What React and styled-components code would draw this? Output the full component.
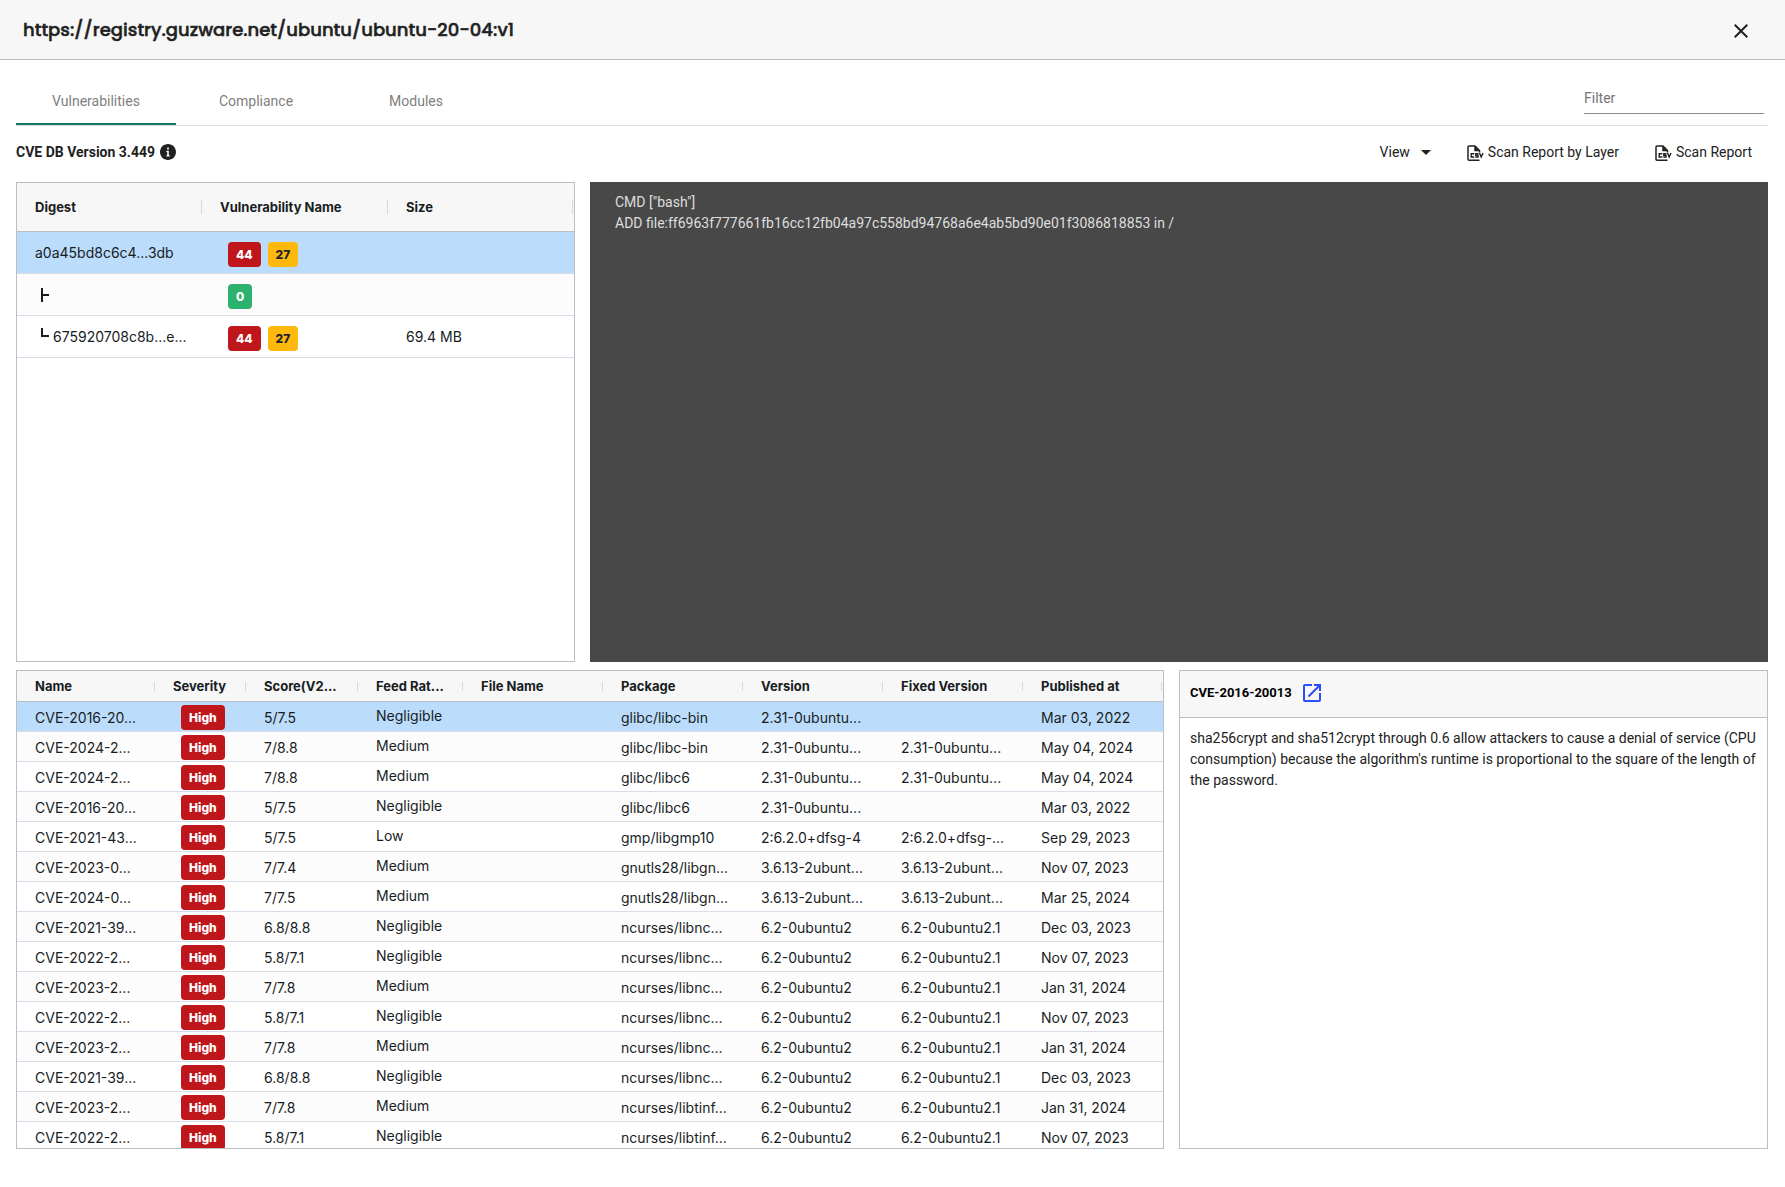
import styled, { createGlobalStyle } from "styled-components";

const COMMANDS = [
  'CMD ["bash"]',
  'ADD file:ff6963f777661fb16cc12fb04a97c558bd94768a6e4ab5bd90e01f3086818853 in /',
];

const TABS = ['Vulnerabilities', 'Compliance', 'Modules'];

const LAYER_COLUMNS = [
  { text: 'Digest', width: 186 },
  { text: 'Vulnerability Name', width: 186 },
  { text: 'Size' },
];

const LAYERS = [
  { digest: 'a0a45bd8c6c4...3db', counts: [['high', 44], ['medium', 27]], size: '' },
  { branch: 'middle', digest: '', counts: [['ok', 0]], size: '' },
  { branch: 'end', digest: '675920708c8b...e...', counts: [['high', 44], ['medium', 27]], size: '69.4 MB' },
];

const CVE_COLUMNS = [
  { text: 'Name', width: 139 },
  { text: 'Severity', width: 91 },
  { text: 'Score(V2...', width: 112 },
  { text: 'Feed Rat...', width: 105 },
  { text: 'File Name', width: 140 },
  { text: 'Package', width: 140 },
  { text: 'Version', width: 140 },
  { text: 'Fixed Version', width: 140 },
  { text: 'Published at' },
];

const CVES = [
  ['CVE-2016-20...', '5/7.5', 'Negligible', 'glibc/libc-bin', '2.31-0ubuntu...', '', 'Mar 03, 2022'],
  ['CVE-2024-2...', '7/8.8', 'Medium', 'glibc/libc-bin', '2.31-0ubuntu...', '2.31-0ubuntu...', 'May 04, 2024'],
  ['CVE-2024-2...', '7/8.8', 'Medium', 'glibc/libc6', '2.31-0ubuntu...', '2.31-0ubuntu...', 'May 04, 2024'],
  ['CVE-2016-20...', '5/7.5', 'Negligible', 'glibc/libc6', '2.31-0ubuntu...', '', 'Mar 03, 2022'],
  ['CVE-2021-43...', '5/7.5', 'Low', 'gmp/libgmp10', '2:6.2.0+dfsg-4', '2:6.2.0+dfsg-...', 'Sep 29, 2023'],
  ['CVE-2023-0...', '7/7.4', 'Medium', 'gnutls28/libgn...', '3.6.13-2ubunt...', '3.6.13-2ubunt...', 'Nov 07, 2023'],
  ['CVE-2024-0...', '7/7.5', 'Medium', 'gnutls28/libgn...', '3.6.13-2ubunt...', '3.6.13-2ubunt...', 'Mar 25, 2024'],
  ['CVE-2021-39...', '6.8/8.8', 'Negligible', 'ncurses/libnc...', '6.2-0ubuntu2', '6.2-0ubuntu2.1', 'Dec 03, 2023'],
  ['CVE-2022-2...', '5.8/7.1', 'Negligible', 'ncurses/libnc...', '6.2-0ubuntu2', '6.2-0ubuntu2.1', 'Nov 07, 2023'],
  ['CVE-2023-2...', '7/7.8', 'Medium', 'ncurses/libnc...', '6.2-0ubuntu2', '6.2-0ubuntu2.1', 'Jan 31, 2024'],
  ['CVE-2022-2...', '5.8/7.1', 'Negligible', 'ncurses/libnc...', '6.2-0ubuntu2', '6.2-0ubuntu2.1', 'Nov 07, 2023'],
  ['CVE-2023-2...', '7/7.8', 'Medium', 'ncurses/libnc...', '6.2-0ubuntu2', '6.2-0ubuntu2.1', 'Jan 31, 2024'],
  ['CVE-2021-39...', '6.8/8.8', 'Negligible', 'ncurses/libnc...', '6.2-0ubuntu2', '6.2-0ubuntu2.1', 'Dec 03, 2023'],
  ['CVE-2023-2...', '7/7.8', 'Medium', 'ncurses/libtinf...', '6.2-0ubuntu2', '6.2-0ubuntu2.1', 'Jan 31, 2024'],
  ['CVE-2022-2...', '5.8/7.1', 'Negligible', 'ncurses/libtinf...', '6.2-0ubuntu2', '6.2-0ubuntu2.1', 'Nov 07, 2023'],
];

const BADGE_COLORS = {
  high: { background: '#bf161c', color: '#fff' },
  medium: { background: '#ffb80c', color: '#212529' },
  ok: { background: '#2cb26e', color: '#fff' },
};

const GlobalStyle = createGlobalStyle`
  * {
    box-sizing: border-box;
  }

  body {
    margin: 0;
    background: #fff;
    color: #212121;
    font-family: Roboto, "Liberation Sans", sans-serif;
    font-size: 14px;
    line-height: 21px;
  }

  button, input {
    color: inherit;
    font: inherit;
  }
`;

const Header = styled.header`
  display: flex;
  align-items: center;
  justify-content: space-between;
  height: 60px;
  padding: 2px 32px 0 23px;
  background: #f7f7f7;
  border-bottom: 1px solid #babfc7;
`;

const Title = styled.h1`
  margin: 0;
  padding-bottom: 2px;
  font-family: Poppins, Inter, sans-serif;
  font-size: 18px;
  font-weight: 500;
  -webkit-text-stroke: 0.5px currentColor;
`;

const IconButton = styled.button`
  display: flex;
  padding: 0;
  background: none;
  border: 0;
  cursor: pointer;
`;

const Main = styled.main`
  padding: 17px 17px 0 16px;
`;

const TabRow = styled.div`
  display: flex;
  justify-content: space-between;
  padding-right: 4px;
  border-bottom: 1px solid #dedede;
`;

const Tabs = styled.nav`
  display: flex;
`;

const Tab = styled.button`
  width: 160px;
  height: 48px;
  padding: 2px 0 0;
  background: none;
  border: 0;
  border-bottom: 2px solid ${({$active}) => $active ? '#11756a' : 'transparent'};
  color: #808080;
  cursor: pointer;
`;

const FilterInput = styled.input`
  width: 180px;
  height: 32px;
  margin-top: 5px;
  padding: 0;
  background: none;
  border: 0;
  border-bottom: 1px solid #8c8c8c;
  outline: none;

  &::placeholder {
    color: #757575;
    opacity: 1;
  }
`;

const Toolbar = styled.div`
  display: flex;
  align-items: center;
  justify-content: space-between;
  height: 56px;
  padding: 0 16px 4px 0;
`;

const DbVersion = styled.div`
  display: flex;
  align-items: center;
  gap: 5px;
  font-weight: 700;
`;

const Actions = styled.div`
  display: flex;
  align-items: center;
  gap: 36px;
`;

const ActionButton = styled.button`
  display: flex;
  align-items: center;
  gap: ${({$gap}) => $gap}px;
  padding: 0;
  background: none;
  border: 0;
  cursor: pointer;
`;

const PanelRow = styled.section`
  display: grid;
  grid-template-columns: ${({$columns}) => $columns};
  gap: 15px;
  height: ${({$height}) => $height}px;
  margin-bottom: 8px;
`;

const Panel = styled.div`
  min-width: 0;
  overflow: hidden;
  border: 1px solid #babfc7;
`;

const Console = styled.div`
  padding: 10px 25px;
  background: #484848;
  color: #dedede;
`;

const Grid = styled.table`
  width: 100%;
  table-layout: fixed;
  border-collapse: separate;
  border-spacing: 0;
  color: #181d1f;
  font-family: Inter, "Liberation Sans", sans-serif;
`;

const Col = styled.col`
  width: ${({$width}) => $width ? `${$width}px` : 'auto'};
`;

const HeadCell = styled.th`
  height: ${({$height}) => $height}px;
  padding: 0 0 0 17px;
  background: linear-gradient(#d5d9df, #d5d9df) right 1px center / 1px 30% no-repeat #f7f7f7;
  border-bottom: 1px solid #babfc7;
  font-size: 13px;
  font-weight: 700;
  text-align: left;
  white-space: nowrap;

  &:first-child {
    padding-left: 18px;
  }
`;

const Row = styled.tr`
  height: ${({$height}) => $height}px;
  background: ${({$selected}) => $selected ? '#bbdcfb' : '#fff'};

  &:nth-child(even) {
    background: #fcfcfc;
  }
`;

const Cell = styled.td`
  height: inherit;
  padding: ${({$top = 0}) => $top}px 0 0 17px;
  border-bottom: 1px solid #d9dce6;
  line-height: 21px;
  white-space: nowrap;

  &:first-child {
    padding-left: 18px;
  }
`;

const RatingCell = styled(Cell)`
  padding-bottom: 2px;
`;

const BadgeList = styled.div`
  display: flex;
  gap: 7px;
  padding: ${({$top}) => $top}px 0 0 8px;
`;

const Badge = styled.span`
  padding: 0 8px;
  border-radius: 4px;
  background: ${({$kind}) => BADGE_COLORS[$kind].background};
  color: ${({$kind}) => BADGE_COLORS[$kind].color};
  font-size: 12px;
  font-weight: 800;
  line-height: 25px;
`;

const Digest = styled.div`
  display: flex;
  align-items: center;
`;

const DetailHeader = styled.div`
  display: flex;
  align-items: center;
  gap: 8px;
  height: 47px;
  padding: 0 10px 3px;
  background: #f7f7f7;
  border-bottom: 1px solid #babfc7;
  color: #000;
`;

const DetailTitle = styled.h2`
  margin: 0;
  font-size: 13px;
  font-weight: 700;
`;

const DetailLink = styled.a`
  display: flex;
  color: #2b4dfb;
`;

const DetailText = styled.p`
  margin: 0;
  padding: 10px;
`;

const CloseIcon = () => (
  <svg width="24" height="24" viewBox="0 0 24 24" fill="currentColor">
    <path d="M19 6.41L17.59 5 12 10.59 6.41 5 5 6.41 10.59 12 5 17.59 6.41 19 12 13.41 17.59 19 19 17.59 13.41 12z" />
  </svg>
);

const InfoIcon = () => (
  <svg width="16" height="16" viewBox="2 2 20 20" fill="currentColor">
    <path d="M12 2C6.48 2 2 6.48 2 12s4.48 10 10 10 10-4.48 10-10S17.52 2 12 2zm2 15.5h-4v-1.5h1v-4h-1v-1.5h3v5.5h1v1.5zm-1-8.5h-2V6.5h2v2.5z" />
  </svg>
);

const CaretIcon = () => (
  <svg width="10" height="5" viewBox="0 0 10 5" fill="currentColor">
    <path d="M0 0h10L5 5z" />
  </svg>
);

const CsvIcon = () => (
  <svg width="17" height="19" viewBox="0 -2 17 19" fill="none" stroke="currentColor">
    <path d="M12.5 15.2H2Q1 15.2 1 14.2V2Q1 1 2 1H8L12.5 5.5V7.5" strokeWidth="1.5" />
    <path d="M7.5 1v5H12.5z" fill="currentColor" strokeWidth="0.5" />
    <path d="M7.3 8.7H4.2V12H7.3M11.5 8.7H8.8V10.35H11V12H8.3M12.5 8L14.2 12L16 8" strokeWidth="1.4" />
  </svg>
);

const OpenIcon = () => (
  <svg width="24" height="24" viewBox="0 0 24 24" fill="currentColor">
    <path d="M19 19H5V5h7V3H5c-1.11 0-2 .9-2 2v14c0 1.1.89 2 2 2h14c1.1 0 2-.9 2-2v-7h-2v7zM14 3v2h3.59l-9.83 9.83 1.41 1.41L19 6.41V10h2V3h-7z" />
  </svg>
);

const BranchIcon = ({ kind }) => (
  <svg width="18" height="20" viewBox="0 0 18 20" fill="none" stroke="currentColor" strokeWidth="2">
    <path d={kind === 'middle' ? 'M7 3v14M7 10h7' : 'M7 1v8h7'} />
  </svg>
);

const GridHead = ({ columns, height }) => (
  <>
    <colgroup>
      {columns.map(({text, width}) => <Col key={text} $width={width} />)}
    </colgroup>
    <thead>
      <tr>
        {columns.map(({text}) => <HeadCell key={text} scope="col" $height={height}>{text}</HeadCell>)}
      </tr>
    </thead>
  </>
);

const buildLayer = ({branch, digest, counts, size}, index) => (
  <Row key={index} $height={42} $selected={index === 0}>
    <Cell>
      <Digest>
        {branch && <BranchIcon kind={branch} />}
        {digest}
      </Digest>
    </Cell>
    <Cell>
      <BadgeList $top={4}>
        {counts.map(([kind, count]) => <Badge key={kind} $kind={kind}>{count}</Badge>)}
      </BadgeList>
    </Cell>
    <Cell>{size}</Cell>
  </Row>
);

const buildCve = ([name, score, rating, pkg, version, fixed, published], index) => (
  <Row key={index} $height={30} $selected={index === 0}>
    <Cell $top={2}>{name}</Cell>
    <Cell>
      <BadgeList $top={1}>
        <Badge $kind="high">High</Badge>
      </BadgeList>
    </Cell>
    <Cell $top={2}>{score}</Cell>
    <RatingCell>{rating}</RatingCell>
    <Cell />
    <Cell $top={2}>{pkg}</Cell>
    <Cell $top={2}>{version}</Cell>
    <Cell $top={2}>{fixed}</Cell>
    <Cell $top={2}>{published}</Cell>
  </Row>
);

export default () => (
  <>
    <GlobalStyle />
    <Header>
      <Title>https://registry.guzware.net/ubuntu/ubuntu-20-04:v1</Title>
      <IconButton aria-label="Close"><CloseIcon /></IconButton>
    </Header>
    <Main>
      <TabRow>
        <Tabs>
          {TABS.map((tab, index) => <Tab key={tab} $active={index === 0}>{tab}</Tab>)}
        </Tabs>
        <FilterInput aria-label="Filter" placeholder="Filter" />
      </TabRow>
      <Toolbar>
        <DbVersion>CVE DB Version 3.449 <InfoIcon /></DbVersion>
        <Actions>
          <ActionButton $gap={11}>View <CaretIcon /></ActionButton>
          <ActionButton $gap={4}><CsvIcon /> Scan Report by Layer</ActionButton>
          <ActionButton $gap={4}><CsvIcon /> Scan Report</ActionButton>
        </Actions>
      </Toolbar>
      <PanelRow $columns="559fr 1178fr" $height={480}>
        <Panel>
          <Grid>
            <GridHead columns={LAYER_COLUMNS} height={49} />
            <tbody>{LAYERS.map(buildLayer)}</tbody>
          </Grid>
        </Panel>
        <Console>
          {COMMANDS.map(command => <div key={command}>{command}</div>)}
        </Console>
      </PanelRow>
      <PanelRow $columns="1148fr 589fr" $height={479}>
        <Panel>
          <Grid>
            <GridHead columns={CVE_COLUMNS} height={31} />
            <tbody>{CVES.map(buildCve)}</tbody>
          </Grid>
        </Panel>
        <Panel>
          <DetailHeader>
            <DetailTitle>CVE-2016-20013</DetailTitle>
            <DetailLink href="#cve" aria-label="Open CVE-2016-20013"><OpenIcon /></DetailLink>
          </DetailHeader>
          <DetailText>
            sha256crypt and sha512crypt through 0.6 allow attackers to cause a denial of service (CPU consumption) because the algorithm's runtime is proportional to the square of the length of the password.
          </DetailText>
        </Panel>
      </PanelRow>
    </Main>
  </>
);
